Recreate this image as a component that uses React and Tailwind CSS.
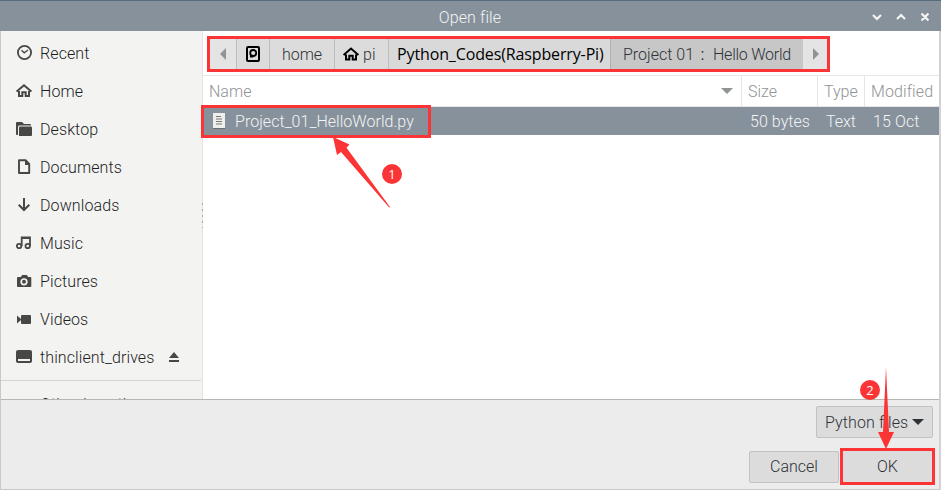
const INK = '#474745';

function PlaceIcon({ name }) {
  const common = { width: 16, height: 16, viewBox: '0 0 16 16', className: 'shrink-0' };
  switch (name) {
    case 'recent':
      return (
        <svg {...common} fill="none" stroke={INK}>
          <circle cx="8.5" cy="7.5" r="6.6" strokeWidth="1.8" />
          <path d="M5.5 5.2 8.2 7.8 12 5" strokeWidth="1.3" />
        </svg>
      );
    case 'home':
      return (
        <svg {...common} fill="none" stroke={INK} strokeWidth="2">
          <path d="M.6 8.600 8 2.200l7.400 6.400" />
          <path d="M3 8v5h3.300V9.200h3.400V13H13V8" />
        </svg>
      );
    case 'desktop':
      return (
        <svg {...common} fill={INK}>
          <path d="M1 1h5l2 2h6a1 1 0 0 1 1 1v.6H3L2 5.5V14H1a1 1 0 0 1-1-1V2a1 1 0 0 1 1-1z" />
          <path d="M4 5.6h11a1 1 0 0 1 1 1V14a1 1 0 0 1-1 1H3V6.6a1 1 0 0 1 1-1z" />
        </svg>
      );
    case 'documents':
      return (
        <svg {...common}>
          <path d="M3 1.2h6.6L13.2 5v9H3z" fill="none" stroke={INK} strokeWidth="1.9" strokeLinejoin="round" />
          <path d="M9 1v5h5L9.500 1z" fill={INK} />
        </svg>
      );
    case 'downloads':
      return (
        <svg {...common} fill="none" stroke={INK} strokeWidth="2">
          <path d="M8 1v12M2.700 7.700 8 13l5.300-5.300" />
        </svg>
      );
    case 'music':
      return (
        <svg {...common} fill="none" stroke={INK} strokeWidth="1.8">
          <circle cx="3.100" cy="11" r="2.200" />
          <circle cx="11.700" cy="11" r="2.200" />
          <path d="M5.700 11V2.500H14V11M5.700 3h8.500" />
        </svg>
      );
    case 'pictures':
      return (
        <svg {...common}>
          <path d="M2 4h3l1-2h5l1 2h2.500a.8.800 0 0 1 .8.800v8.400a.8.800 0 0 1-.8.800H2a1 1 0 0 1-1-1V5a1 1 0 0 1 1-1z" fill={INK} />
          <circle cx="8" cy="8.800" r="2.800" fill="none" stroke="#f3f3f2" strokeWidth="1.700" />
        </svg>
      );
    case 'videos':
      return (
        <svg {...common} fill={INK}>
          <rect x="5" y="4" width="10" height="9" rx="1" />
          <path d="M1 4.500v8L5 9V8z" />
        </svg>
      );
    default:
      return (
        <svg {...common}>
          <rect x="0" y="1" width="16" height="13" rx="2" fill={INK} />
          <path d="M2 11h12" stroke="#f3f3f2" strokeWidth="2" />
        </svg>
      );
  }
}

const PLACES = [
  ['recent', 'Recent'],
  ['home', 'Home'],
  ['desktop', 'Desktop'],
  ['documents', 'Documents'],
  ['downloads', 'Downloads'],
  ['music', 'Music'],
  ['pictures', 'Pictures'],
  ['videos', 'Videos'],
  ['drive', 'thinclient_drives'],
];

function TitleBar() {
  return (
    <header className="flex h-[31px] shrink-0 items-center justify-end border-t border-[#566b7b] bg-[#87919b] pr-[12px]">
      <h1 className="flex-1 pt-[3px] pl-[71px] text-center font-light tracking-[0.1px] text-[#f2f4f5]">Open file</h1>
      <svg width="60" height="10" viewBox="0 0 60 10" fill="none" stroke="#f4f5f6" strokeWidth="2.200" className="mt-[2px]">
        <path d="M4 3l4 4 4-4M28 7l4-4 4 4M52.500 1.500l7 7M59.500 1.500l-7 7" />
      </svg>
    </header>
  );
}

function Sidebar() {
  return (
    <aside className="h-full w-[202px] shrink-0 overflow-hidden border-r border-[#e3e3e3] bg-[#f3f3f2] pt-[3px] text-[#1d1d1d]">
      {PLACES.map(([icon, label]) => (
        <div key={icon} className="flex h-[38px] items-center gap-2 pl-[15px]">
          <PlaceIcon name={icon} />
          <span className="pt-[2px] tracking-[0.1px]">{label}</span>
          {icon === 'drive' && (
            <svg width="12" height="12" viewBox="0 0 12 12" fill={INK} className="ml-[6px]">
              <path d="M6 1l5 6H1zM1 9h10v2H1z" />
            </svg>
          )}
        </div>
      ))}
      <div className="mt-[4px] mr-px h-px bg-[#d5d5d3]" />
      <div className="flex h-[38px] items-center pt-[9px] pl-[39px] tracking-[0.1px]">Other Locations</div>
    </aside>
  );
}

function PathBar() {
  return (
    <nav className="ml-[4px] mt-[5px] flex h-[36px] w-[623px] border-3 border-[#fb3535] bg-[#dcdcdc] text-[#2d3236]">
      <div className="flex w-[27px] items-center justify-center border-r border-[#bebebe] bg-[#e4e4e4]">
        <svg width="6" height="12" viewBox="0 0 6 12"><path d="M6 0v12L0 6z" fill="#909396" /></svg>
      </div>
      <div className="flex w-[33px] items-center justify-center border-r border-[#bebebe]">
        <svg width="14" height="16" viewBox="0 0 14 16" fill="none" stroke="#000">
          <rect x="1" y="1" width="12" height="14" rx="1" strokeWidth="2" />
          <circle cx="7.200" cy="7" r="3" strokeWidth="1.800" />
          <path d="M4 8v3.500h3.500z" fill="#000" stroke="none" />
        </svg>
      </div>
      <div className="flex w-[65px] items-center justify-center border-r border-[#bebebe] pt-[2px]">home</div>
      <div className="flex w-[54px] items-center gap-[4px] border-r border-[#bebebe] pl-[8px]">
        <svg width="16" height="15" viewBox="0 0 16 15" fill="none" stroke="#000" strokeWidth="2">
          <path d="M.600 8.100 8 1.600l7.400 6.500M3 7.500v5h3.300V8.700h3.400v3.800H13v-5" />
        </svg>
        <span className="pt-[2px]">pi</span>
      </div>
      <div className="flex w-[222px] items-center border-r border-[#b0b0b0] bg-[#d9d9d9] pl-[8px] font-['Open_Sans','Noto_Sans',sans-serif] text-[16px] font-normal tracking-[-0.13px] whitespace-nowrap text-black">
        Python_Codes(Raspberry-Pi)
      </div>
      <div className="flex w-[192px] items-center bg-[#c7c7c7] pt-[2px] pl-[12px] whitespace-pre">
        Project 01<span className="w-[19px] pr-[2px] text-center font-normal">:</span>
        <span className="tracking-[-0.25px]">Hello World</span>
      </div>
      <div className="flex flex-1 items-center justify-center bg-[#e4e4e4] pl-px">
        <svg width="6" height="12" viewBox="0 0 6 12"><path d="M0 0v12l6-6z" fill="#909396" /></svg>
      </div>
    </nav>
  );
}

function FileList() {
  return (
    <section className="mt-[3px] border-t border-[#e8e8e8]">
      <div className="flex h-[31px] items-center border-b border-[#e5e5e5] text-[#909396]">
        <div className="flex h-full w-[539px] items-center justify-between border-r border-[#e5e5e5] pr-[8px] pl-[6px]">
          <span className="pt-[2px]">Name</span>
          <svg width="12" height="6" viewBox="0 0 12 6"><path d="M0 0h12L6 6z" fill="#909396" /></svg>
        </div>
        <div className="flex h-full w-[76px] items-center border-r border-[#e5e5e5] pt-[2px] pl-[6px]">Size</div>
        <div className="flex h-full w-[47px] items-center border-r border-[#e5e5e5] pt-[2px] pl-[6px]">Type</div>
        <div className="pt-[2px] pl-[6px] tracking-[0.1px]">Modified</div>
      </div>
      <div className="flex h-[28px] items-center bg-[#87919b] text-[#f3f4f5]">
        <div className="flex w-[539px] items-center pl-[10px]">
          <svg width="12" height="16" viewBox="0 0 12 16">
            <path d="M0 0h12v15H0z" fill="#eeeeec" />
            <path d="M3 3.500h5M3 6h6M3 8.500h6M3 11h6" stroke="#777" />
            <path d="M0 15.500h12" stroke="#686d72" />
          </svg>
          <span className="pt-[2px] pl-[10px] tracking-[0.04px]">Project_01_HelloWorld.py</span>
        </div>
        <div className="w-[76px] pt-[2px] pl-[8px] tracking-[0.05px]">50 bytes</div>
        <div className="w-[47px] pt-[2px] pl-[8px]">Text</div>
        <div className="pt-[2px] pl-[8px] tracking-[0.1px]">15 Oct</div>
      </div>
    </section>
  );
}

function Footer() {
  return (
    <footer className="flex h-[91px] shrink-0 flex-col items-end border-t border-b border-t-[#b6b6b3] border-b-[#c8c8c8] bg-[#ececec] pt-[6px] text-[#2d3236]">
      <div className="mr-[6px] flex h-[32px] w-[117px] items-center rounded-[2px] border border-[#c2c2c2] bg-[#dcdcdc] pl-[8px]">
        <span className="pt-[2px] tracking-[0.1px]">Python files</span>
        <svg width="12" height="6" viewBox="0 0 12 6" className="ml-[4px]"><path d="M0 0h12L6 6z" fill="#2d3236" /></svg>
      </div>
      <div className="mt-[10px] mr-[4px] flex items-center gap-px">
        <div className="flex h-[32px] w-[90px] items-center justify-center rounded-[2px] border border-[#c2c2c2] bg-[#dcdcdc] pt-px">Cancel</div>
        <div className="flex h-[37px] w-[95px] items-center justify-center border-3 border-[#fb3535] bg-[#dcdcdc]">OK</div>
      </div>
    </footer>
  );
}

function Annotations() {
  return (
    <>
      <div className="absolute top-[105px] left-[201px] h-[33px] w-[230px] border-3 border-[#fb3535]" />
      <svg className="absolute top-0 left-0" width="941" height="490" viewBox="0 0 941 490" fill="#fb3535">
        <path d="M333 137 349.500 144.500l-3 3.200 43.500 59.300-.8.500-48.200-55.500-4 3z" />
        <path d="M886 367l3 65h5l-8 17-8-17h5z" />
      </svg>
      <div className="absolute top-[164px] left-[382px] flex size-5 items-center justify-center rounded-full bg-[#fb3535] pb-px font-['Open_Sans',sans-serif] text-[13px] font-normal text-white">1</div>
      <div className="absolute top-[380px] left-[860px] flex size-5 items-center justify-center rounded-full bg-[#fb3535] pb-px font-['Open_Sans',sans-serif] text-[13px] font-normal text-white">2</div>
      <div className="absolute top-[203px] left-[202px] h-[25px] w-px bg-[repeating-linear-gradient(to_bottom,#aaa_0_2px,transparent_2px_6px)]" />
    </>
  );
}

export default function App() {
  return (
    <main className="relative flex h-[490px] w-[941px] flex-col overflow-hidden bg-white font-[Roboto,'Liberation_Sans',sans-serif] text-[16px] leading-5 font-light">
      <TitleBar />
      <div className="flex min-h-0 flex-1 flex-col border-r-2 border-l border-r-[#d2d2d2] border-l-[#c8c8c8]">
        <div className="flex min-h-0 flex-1">
          <Sidebar />
          <div className="min-w-0 flex-1">
            <PathBar />
            <FileList />
          </div>
        </div>
        <Footer />
      </div>
      <Annotations />
    </main>
  );
}
